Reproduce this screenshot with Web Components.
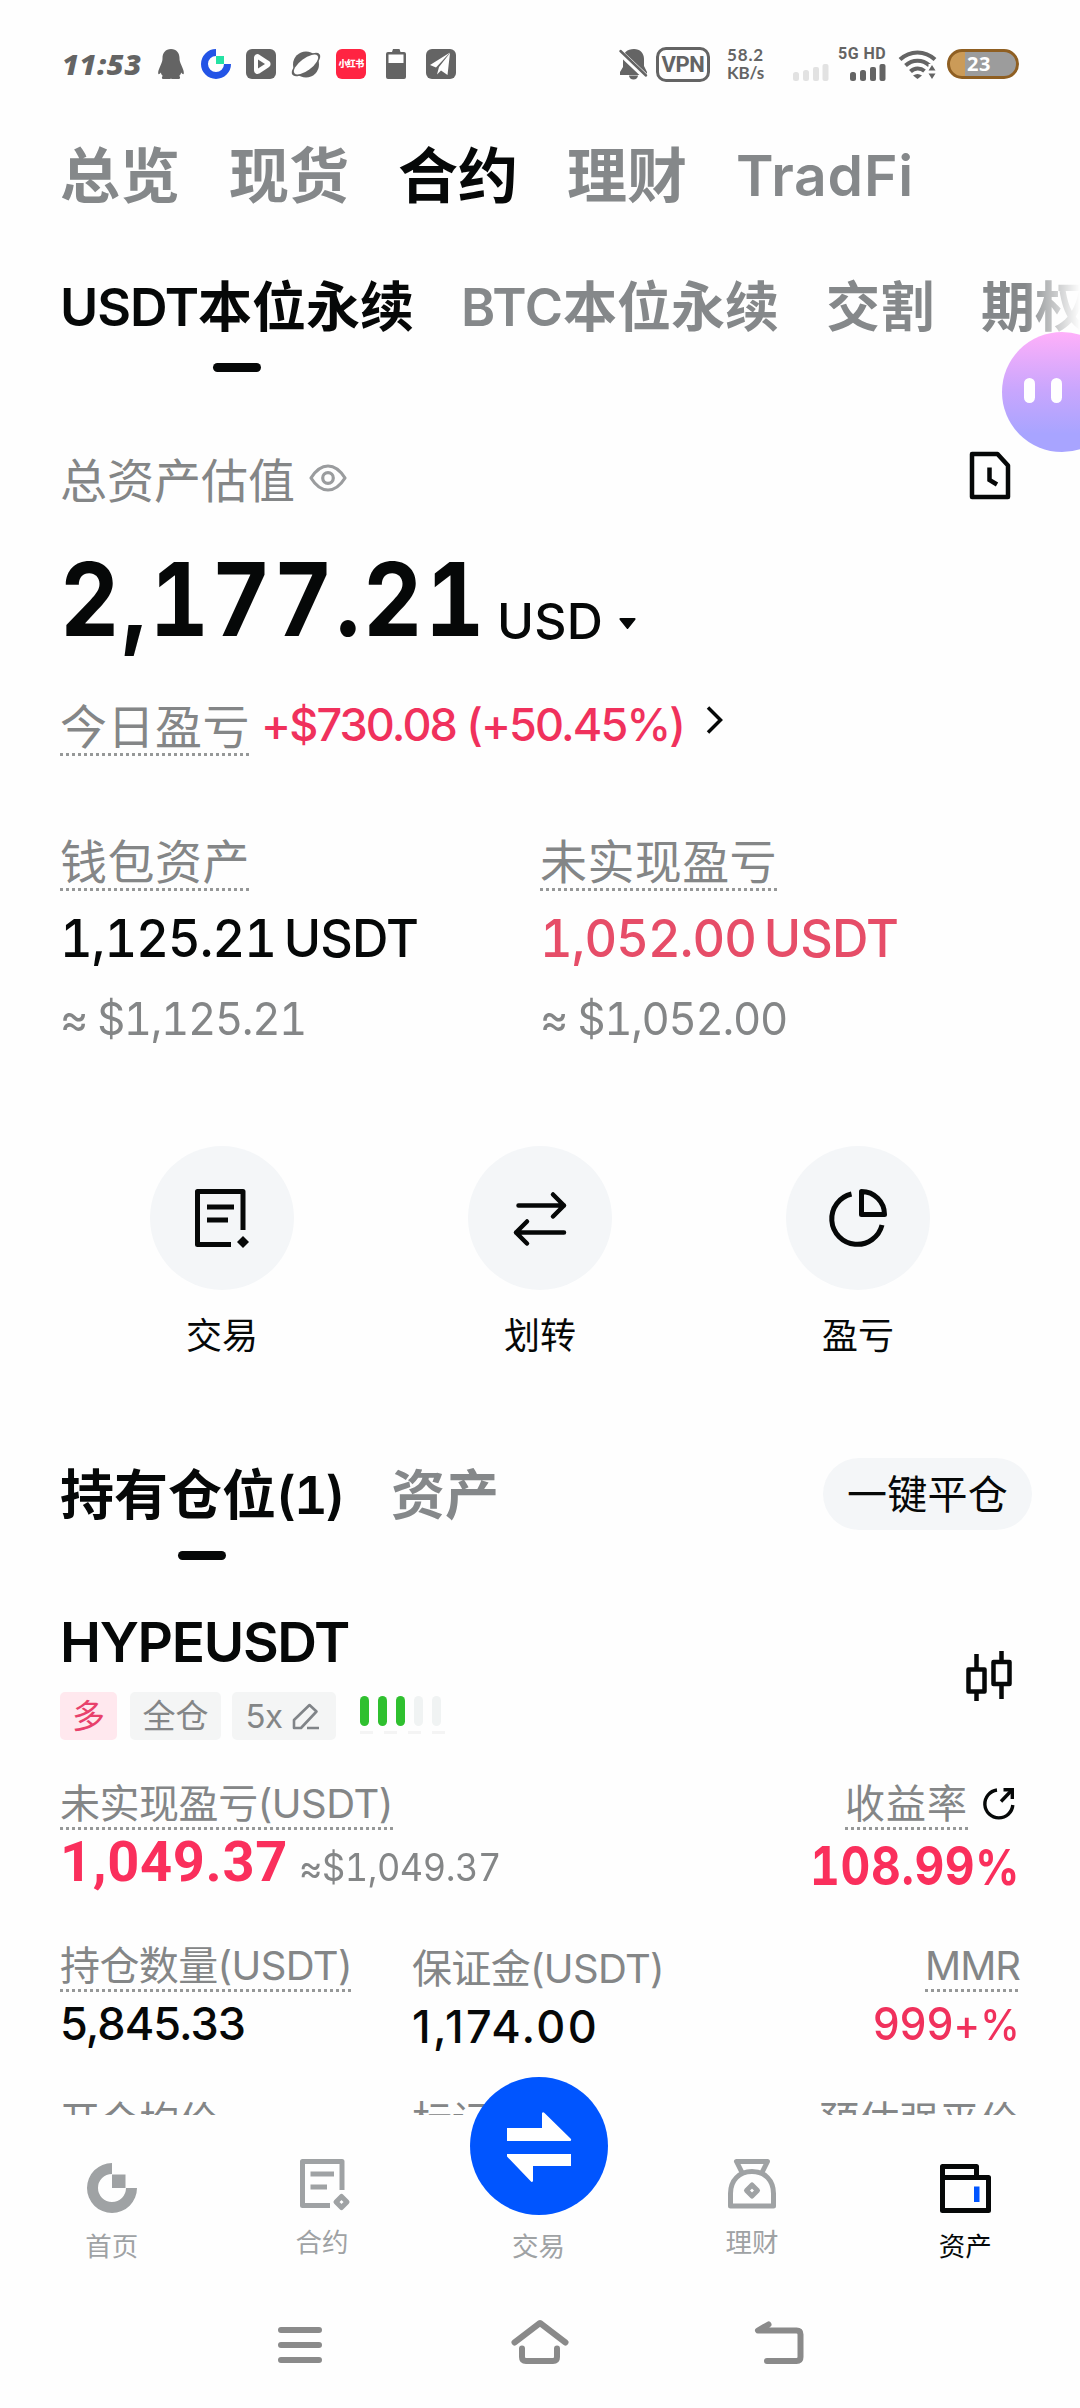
<!DOCTYPE html>
<html lang="zh-CN">
<head>
<meta charset="utf-8">
<title>合约资产</title>
<style>
  html, body { margin: 0; background: #fefefe; }
  body { width: 1080px; height: 2408px; overflow: hidden; color: #060808;
    font-family: Inter, "Noto Sans CJK SC", sans-serif; }
</style>
</head>
<body>
<asset-screen></asset-screen>
<script>
const ICONS = {
  qq: [26, 30, `<path fill="#646464" d="M13 0C18.500 0 21.500 4 21.500 9c0 3 .5 4 2 7.500 1.800 4 2.500 6 2.300 8-.2 1.200-1.500.6-2.600-1-.3 1.500-1 2.600-2 3.500 1.200.8 1.300 3-.7 3h-6.500c-.7 0-.7-.6-1-.6s-.4.600-1 .600H5.500c-2 0-1.900-2.200-.7-3-1-.9-1.700-2-2-3.500-1.100 1.600-2.400 2.200-2.600 1-.2-2 .5-4 2.300-8C4 13 4.500 12 4.500 9c0-5 3-9 8.500-9z"/>`],
  coin: [30, 30, `<path fill="#2354e6" d="M15 0A15 15 0 1 0 30 15H23A8 8 0 1 1 15 7z"/><path fill="#25e2a4" d="M15 7h8v8h-8z"/>`],
  play: [30, 30, `<rect width="30" height="30" rx="6" fill="#646464"/><path d="M10 8.500v13a1.500 1.500 0 0 0 2.200 1.300l9.500-6.200a1.700 1.700 0 0 0 0-3l-9.500-6.300A1.500 1.500 0 0 0 10 8.500z" fill="#fefefe" stroke="#fefefe" stroke-width="4" stroke-linejoin="round"/><path fill="#646464" d="M12 10.500v9l7-4.500z"/>`],
  planet: [30, 30, `<circle cx="15" cy="15.500" r="13" fill="#646464"/><ellipse cx="15" cy="15.500" rx="17" ry="7" transform="rotate(-37 15 15.500)" fill="#646464"/><ellipse cx="15" cy="15.500" rx="14.500" ry="6" transform="rotate(-37 15 15.500)" fill="#fefefe"/>`],
  battery: [20, 30, `<path fill="#646464" fill-rule="evenodd" d="M7 0h6.500l1 3H18a2 2 0 0 1 2 2v23a2 2 0 0 1-2 2H2a2 2 0 0 1-2-2V5a2 2 0 0 1 2-2h4zM2.500 5.500v8.500h15V5.500z"/>`],
  plane: [30, 30, `<rect width="30" height="30" rx="6" fill="#646464"/><path fill="#fefefe" d="M24 3.500 4 16l6 2.500zM24 4 13 18l-2 7.500 4-4 6.500 4.500z"/>`],
  bell: [27, 30, `<path fill="#646464" d="M14 0c6 0 10 4 10 10v7l3 6v3H3L0 26v-3l3-5v-8C3 4 7 0 14 0z"/><path fill="#646464" d="M9 26.500h9a4.500 4 0 0 1-9 0z"/><path d="M-1 2.500 27 29" stroke="#fefefe" stroke-width="6"/><path d="M.5 2 26 26.500" stroke="#646464" stroke-width="2.500" stroke-linecap="round"/>`],
  signal: [36, 17, `<g fill="currentColor"><rect y="8" width="6" height="9" rx="2.500"/><rect x="10" y="6" width="6" height="11" rx="2.500"/><rect x="20" y="3" width="6" height="14" rx="2"/><rect x="29.500" width="6" height="17" rx="2"/></g>`],
  wifi: [37, 29, `<g fill="none" stroke="#646464" stroke-width="4"><path d="M1 9.500C11 0 26 0 36 9.500"/><path d="M6.500 15.500c7-6.500 17-6.500 24 0"/><path d="M11.500 21.500c4-4 10-4 14-.5"/></g><path fill="#646464" d="M14 25.500q4.500-3 9 0L18.500 29z"/><path stroke="#fefefe" stroke-width="7" d="M33 14v15"/><path fill="#646464" d="m33 15 3.500 5.500h-7zM33 29l3.500-5.500h-7z"/>`],
  eye: [38, 28, `<g fill="none" stroke="#9a9c9e" stroke-width="3.200"><path stroke-linejoin="round" d="M2 14C7 6 12 2 19 2s12 4 17 12c-5 8-10 12-17 12S7 22 2 14z"/><circle cx="19" cy="14" r="5.300"/></g>`],
  history: [40, 47, `<g fill="none" stroke="#060808" stroke-width="4.500"><path stroke-linejoin="round" d="M2 2h25.500L38 13.500V45H2z"/><path d="M19.500 15.500V28l7.500 4.500"/></g>`],
  caret: [17, 11, `<path fill="#060808" d="M1.500 0h14a1 1 0 0 1 .8 1.700L9.300 10.500a1 1 0 0 1-1.600 0L.7 1.700A1 1 0 0 1 1.500 0z"/>`],
  chevron: [18, 28, `<path fill="none" stroke="#060808" stroke-width="3.500" d="M2 1.500 14.500 14 2 26.500"/>`],
  order: [54, 58, `<g fill="none" stroke="#060808" stroke-width="5"><path stroke-linejoin="round" d="M48 41V2.500H2.500v53H36"/><path d="M12 18h27M12 31h21"/></g><path fill="#060808" d="m48 47 6 6-6 6-6-6z"/>`],
  swap: [52, 53, `<g fill="none" stroke="#060808" stroke-width="4.500" stroke-linecap="round" stroke-linejoin="round"><path d="M4.500 13.500H50M39 2.500l11 11-11 11"/><path d="M50 40.500H2M13 29.500l-11 11 11 11"/></g>`],
  pie: [58, 58, `<g fill="none" stroke="#060808" stroke-width="5" stroke-linejoin="round"><path d="M22.500 5A25.500 25.500 0 1 0 53 36"/><path d="M32.500 2.500v23h23a23 23 0 0 0-23-23z"/></g>`],
  candles: [46, 50, `<g fill="none" stroke="#060808" stroke-width="4.500" stroke-linejoin="round"><path d="M2.500 18.500h16v22h-16zM10.500 3v15M10.500 41v9M27.500 11h16v22h-16zM35.500 0v11M35.500 33v15"/></g>`],
  pencil: [27, 27, `<path fill="none" stroke="#808488" stroke-width="2.600" stroke-linejoin="round" d="M2 25v-8L17.500 2l7 6.500L9 25zM15 25h12"/>`],
  share: [32, 33, `<g fill="none" stroke="#060808" stroke-width="3.400"><path d="M14 3A14 14 0 1 0 29.800 18M18 14.500 28 4"/><path d="M20.500 2.700h8.800V12"/></g>`],
  home: [50, 50, `<path fill="#9fa2a4" d="M25 0A25 25 0 1 0 50 25H39A14 14 0 1 1 25 11zM25 11.500h13.500V25H25z"/>`],
  contract: [50, 51, `<g fill="none" stroke="#9fa2a4" stroke-width="5"><path stroke-linejoin="round" d="M42 31V2.500H2.500v44H30"/><path d="M10.500 15H34M10.500 28H27"/><path stroke-linejoin="round" d="m41.500 37.500 5.500 5.500-5.500 5.500L36 43z"/></g>`],
  trade: [138, 138, `<circle cx="69" cy="69" r="69" fill="#0055ff"/><path fill="#fff" d="M37 51h35V36q1-1.500 2.500 0l26.500 26q.5 2-1 2H37zM101 77v12H63v15q-1 2-2.500 0L37 79.500V77z"/>`],
  bag: [48, 50, `<g fill="none" stroke="#9fa2a4" stroke-width="5" stroke-linejoin="round"><path d="M14 13.500 8.500 2.500h31L34 13.500"/><path d="M24 12.500c-13 0-21.500 9-21.500 22V47h43V34.500c0-13-8.500-22-21.500-22z"/><path d="m24 26 5.500 5.500L24 37l-5.500-5.500z"/></g>`],
  wallet: [51, 49, `<g fill="none" stroke="#060808" stroke-width="5" stroke-linejoin="round"><path d="M2.500 13.500h46v33h-46zM2.500 13.500v-11h34v11"/></g><path fill="#0055ff" d="M34 22.500h5.500V38H34z"/>`],
  menu: [46, 38, `<path stroke="#8a8a8a" stroke-width="6" stroke-linecap="round" d="M4 4h38M4 19h38M4 34h38"/>`],
  sysHome: [58, 44, `<g fill="none" stroke="#8a8a8a" stroke-width="6" stroke-linecap="round" stroke-linejoin="round"><path d="M3.500 22.500 29 3l25.500 19.500"/><path d="M11 28.500v8.500q0 4 4 4h27q4 0 4-4v-8.500"/></g>`],
  back: [49, 43, `<path fill="none" stroke="#8a8a8a" stroke-width="6" stroke-linecap="round" stroke-linejoin="round" d="M13.500 3.500 3 9.500h38.500q4 0 4 4V36q0 4-4 4H12"/>`],
};

/* Shared base: renders the static markup of a class into an open shadow root. */
class Base extends HTMLElement {
  connectedCallback() {
    if (this.shadowRoot) return;
    this.attachShadow({ mode: 'open' }).innerHTML = this.view();
  }
}

const ROW = `*{box-sizing:border-box} .row{display:flex;align-items:center} .grow{flex:1}`;

class UiIcon extends Base {
  view() {
    const [w, h, body] = ICONS[this.getAttribute('name')];
    return `<style>:host{display:block;flex:none;width:${w}px;height:${h}px}svg{display:block;overflow:visible}</style>
      <svg width="${w}" height="${h}" viewBox="0 0 ${w} ${h}">${body}</svg>`;
  }
}

/* A single line of text whose tracking is tuned so that it spans w pixels.
   squeeze condenses the glyphs horizontally by that factor first. */
class FitText extends Base {
  view() {
    const k = this.getAttribute('squeeze') || 1;
    return `<style>:host{display:block;flex:none;width:max-content;white-space:nowrap}
      span{display:inline-block;${k === 1 ? '' : `transform:scaleX(${k});transform-origin:0 50%`}}</style><span><slot></slot></span>`;
  }
  connectedCallback() {
    super.connectedCallback();
    const w = +this.getAttribute('w');
    if (!w) return;
    const k = +(this.getAttribute('squeeze') || 1);
    const natural = this.getBoundingClientRect().width;
    this.style.letterSpacing = (w / k - natural) / [...this.textContent].length + 'px';
    this.style.width = w + 'px';
  }
}

class HintLabel extends Base {
  view() {
    return `<style>:host{display:block;flex:none;width:max-content;white-space:nowrap;color:var(--muted);font-size:47px;line-height:52px}
      i{display:block;height:3px;background:repeating-linear-gradient(90deg,#969898 0 3px,transparent 3px 6px)}
      :host([plain]) i{visibility:hidden}</style><slot></slot><i></i>`;
  }
}

class StatusBar extends Base {
  view() {
    return `<style>${ROW}
      :host{display:flex;align-items:center;height:128px;padding:0 61px 0 62px;color:#646464}
      .time{font:italic 800 29px/40px "Open Sans",sans-serif;margin-right:16px}
      .red{width:30px;height:30px;border-radius:6px;background:#ff2442;color:#fff;font-size:9px;line-height:30px;font-weight:900;display:flex;justify-content:center}
      .vpn{width:54px;height:35px;border:3px solid #646464;border-radius:10px;font:700 22px/29px Roboto,sans-serif;display:flex;justify-content:center;margin:0 17px 0 9px}
      .rate{font:700 17px/18px Lato,sans-serif;margin-right:29px}
      .five{height:34px;font:700 16px/14px Roboto,sans-serif;display:flex;flex-direction:column;align-items:flex-end;justify-content:space-between;margin:0 13px 0 9px}
      .bat{width:72px;height:30px;border:3px solid #8f5f22;border-radius:15px;background:linear-gradient(90deg,#cb9b58 0 15px,#9c9c9c 15px);color:#fff;font:700 20px/24px "Open Sans",sans-serif;display:flex;padding-left:17px;margin-left:11px}
      </style>
      <fit-text class="time" w="80">11:53</fit-text>
      <ui-icon name="qq"></ui-icon>
      <ui-icon name="coin" style="margin-left:17px"></ui-icon>
      <ui-icon name="play" style="margin-left:15px"></ui-icon>
      <ui-icon name="planet" style="margin-left:15px"></ui-icon>
      <div class="red" style="margin-left:15px"><fit-text w="25">小红书</fit-text></div>
      <ui-icon name="battery" style="margin-left:20px"></ui-icon>
      <ui-icon name="plane" style="margin-left:20px"></ui-icon>
      <span class="grow"></span>
      <ui-icon name="bell"></ui-icon>
      <div class="vpn"><fit-text w="43">VPN</fit-text></div>
      <div class="rate"><fit-text w="37">58.2</fit-text><fit-text w="37">KB/s</fit-text></div>
      <ui-icon name="signal" style="color:#e2e2e2;margin-top:17px"></ui-icon>
      <div class="five"><fit-text w="48">5G HD</fit-text><ui-icon name="signal"></ui-icon></div>
      <ui-icon name="wifi"></ui-icon>
      <div class="bat"><fit-text w="24">23</fit-text></div>`;
  }
}

class TabItem extends Base {
  view() {
    return `<style>:host{display:flex;flex:none;flex-direction:column;align-items:center;color:#85888a;white-space:nowrap;font-weight:700}
      :host([active]){color:#060808}
      .t{display:flex}
      i{display:none;width:48px;height:9px;border-radius:5px;background:#060808;margin-top:var(--bar-gap,25px)}
      :host([active][bar]) i{display:block}</style><div class="t"><slot></slot></div><i></i>`;
  }
}

class HelperBubble extends Base {
  view() {
    return `<style>:host{position:absolute;left:1002px;top:332px;width:120px;height:120px;border-radius:60px;background:linear-gradient(180deg,#ffb0fa,#c9a6fd 48%,#a8a4ff 85%);display:flex;gap:16px;padding:46px 0 0 22px;box-sizing:border-box}
      i{width:11px;height:25px;border-radius:6px;background:#fff}</style><i></i><i></i>`;
  }
}

class QuickAction extends Base {
  view() {
    return `<style>:host{display:flex;flex-direction:column;align-items:center;width:144px;font-size:36px;line-height:40px}
      .c{width:144px;height:144px;border-radius:50%;background:#f4f6f8;display:flex;align-items:center;justify-content:center;margin-bottom:26px}</style>
      <div class="c"><ui-icon name="${this.getAttribute('icon')}"></ui-icon></div><slot></slot>`;
  }
}

class AssetSummary extends Base {
  view() {
    return `<style>${ROW}
      :host{display:block;padding:57px 60px 0}
      .est{height:60px;font-size:47px;line-height:56px;color:var(--muted);gap:16px}
      .total{margin-top:30px;height:120px;display:flex;align-items:flex-start}
      .big{font-weight:700;font-size:102px;line-height:120px;font-feature-settings:var(--slab)}
      .usd{font-size:50px;line-height:60px;font-weight:500;margin:52px 0 0 10px}
      .pnl{margin-top:42px;align-items:flex-start}
      .red{color:#f0315c;font-size:45px;line-height:48px;font-weight:500;margin-left:11px}
      .stats{display:grid;grid-template-columns:480px 1fr;margin-top:80px}
      .val{font-size:52px;line-height:60px;font-weight:500;margin-top:18px;word-spacing:-5px;font-feature-settings:var(--slab)}
      .loss{color:#e64d68}
      .eq{font-size:45px;line-height:50px;color:var(--muted);margin-top:25px;font-feature-settings:var(--slab)}
      .acts{display:flex;justify-content:space-between;padding:0 90px;margin-top:102px}
      </style>
      <div class="row est"><fit-text w="235" style="margin-top:3px">总资产估值</fit-text><ui-icon name="eye" style="margin:-2px 0 0 -2px"></ui-icon><span class="grow"></span><ui-icon name="history" style="margin:-7px 10px 0 0"></ui-icon></div>
      <div class="total"><fit-text class="big" w="427" squeeze=".9">2,177.21</fit-text><fit-text class="usd" w="106">USD</fit-text><ui-icon name="caret" style="margin:79px 0 0 16px"></ui-icon></div>
      <div class="row pnl"><hint-label><fit-text w="190">今日盈亏</fit-text></hint-label><fit-text class="red" w="423">+$730.08 (+50.45%)</fit-text><ui-icon name="chevron" style="margin:5px 0 0 22px"></ui-icon></div>
      <div class="stats">
        <div><hint-label><fit-text w="190">钱包资产</fit-text></hint-label><fit-text class="val" w="358" squeeze=".97">1,125.21 USDT</fit-text><fit-text class="eq" w="246" squeeze=".97">≈ $1,125.21</fit-text></div>
        <div><hint-label><fit-text w="237">未实现盈亏</fit-text></hint-label><fit-text class="val loss" w="358" squeeze=".97">1,052.00 USDT</fit-text><fit-text class="eq" w="247" squeeze=".97">≈ $1,052.00</fit-text></div>
      </div>
      <div class="acts"><quick-action icon="order">交易</quick-action><quick-action icon="swap">划转</quick-action><quick-action icon="pie">盈亏</quick-action></div>`;
  }
}

class PositionTag extends Base {
  view() {
    return `<style>:host{display:flex;align-items:center;justify-content:center;height:48px;border-radius:5px;background:#f4f5f5;color:var(--muted);font-size:33px;line-height:48px;gap:9px;box-sizing:border-box}
      :host([tone=long]){background:#ffe8ee;color:#e8416b}</style><slot></slot>`;
  }
}

class StrengthMeter extends Base {
  view() {
    return `<style>:host{display:flex;flex-direction:column;gap:5px;align-self:flex-start;margin-top:4px}
      div{display:flex;gap:9px} i{width:9px;height:30px;border-radius:5px;background:#f0f3f3} .on{background:#2fc02f}
      .u{gap:11px} .u i{width:13px;height:3px;border-radius:0;background:#f4f4f4}</style>
      <div><i class="on"></i><i class="on"></i><i class="on"></i><i></i><i></i></div><div class="u"><i></i><i></i><i></i><i></i></div>`;
  }
}

class PositionCard extends Base {
  view() {
    return `<style>${ROW}
      :host{display:block;padding:52px 60px 0}
      .name{font-size:55px;line-height:60px;font-weight:600}
      .tags{display:flex;margin-top:20px}
      hint-label{font-size:40px;line-height:46px}
      .a{display:flex;justify-content:space-between;margin-top:41px;height:162px}
      .r{display:flex;flex-direction:column;align-items:flex-end}
      .big{display:flex;align-items:baseline;line-height:60px;margin-top:2px}
      .pnl{font:700 56px/60px Roboto,sans-serif;color:#fa2f5c}
      .eq{font-size:38px;color:var(--muted);margin-left:11px;font-feature-settings:var(--slab)}
      .roi{font-weight:700;font-size:53px;line-height:60px;color:#fa2f5c;margin-top:6px;font-feature-settings:var(--slab)}
      .b{display:grid;grid-template-columns:352px 1fr auto;height:155px}
      .v{font-size:45px;line-height:50px;font-weight:500;margin-top:7px}
      .m{padding-top:3px}
      small{font-size:.94em}
      </style>
      <div class="row"><div class="grow"><fit-text class="name" w="289">HYPEUSDT</fit-text>
        <div class="tags">
          <position-tag tone="long" style="width:57px">多</position-tag>
          <position-tag style="width:91px;margin-left:13px">全仓</position-tag>
          <position-tag style="width:104px;margin-left:11px"><fit-text w="37">5x</fit-text><ui-icon name="pencil" style="margin-right:4px"></ui-icon></position-tag>
          <strength-meter style="margin-left:24px"></strength-meter>
        </div></div><ui-icon name="candles" style="margin-right:8px"></ui-icon></div>
      <div class="a">
        <div><hint-label><fit-text w="333">未实现盈亏(USDT)</fit-text></hint-label><div class="big"><fit-text class="pnl" w="228">1,049.37</fit-text><fit-text class="eq" w="202" squeeze=".95">≈$1,049.37</fit-text></div></div>
        <div class="r"><div class="row" style="align-items:flex-start"><hint-label><fit-text w="123">收益率</fit-text></hint-label><ui-icon name="share" style="margin:6px 5px 0 15px"></ui-icon></div><fit-text class="roi" w="210" squeeze=".87">108.99<small>%</small></fit-text></div>
      </div>
      <div class="b">
        <div><hint-label><fit-text w="292">持仓数量(USDT)</fit-text></hint-label><fit-text class="v" w="185">5,845.33</fit-text></div>
        <div class="m"><hint-label plain><fit-text w="252">保证金(USDT)</fit-text></hint-label><fit-text class="v" w="187">1,174.00</fit-text></div>
        <div class="r"><hint-label><fit-text w="95">MMR</fit-text></hint-label><fit-text class="v" w="147" squeeze=".94" style="color:#f0315c">999<small>+%</small></fit-text></div>
      </div>
      <div class="b"><hint-label><fit-text w="159">开仓均价</fit-text></hint-label><hint-label><fit-text w="159">标记价格</fit-text></hint-label><hint-label><fit-text w="201">预估强平价</fit-text></hint-label></div>`;
  }
}

class NavItem extends Base {
  view() {
    return `<style>:host{display:flex;flex:1;flex-direction:column;align-items:center;color:#9fa2a4;font-size:26.500px;line-height:30px}
      :host([active]){color:#060808}
      .gap{flex:1}</style>
      <ui-icon name="${this.getAttribute('icon')}"></ui-icon><span class="gap"></span><slot></slot>`;
  }
}

class BottomNav extends Base {
  view() {
    return `<style>:host{display:flex;height:175px;padding:0 8px 0 5px;box-sizing:border-box;background:#fefefe;position:relative}
      nav-item{box-sizing:border-box}</style>
      <nav-item icon="home" style="padding:48px 0 29px">首页</nav-item>
      <nav-item icon="contract" style="padding:44px 0 33px"><span style="padding-right:6px">合约</span></nav-item>
      <nav-item icon="trade" style="margin-top:-38px;padding:0 0 29px">交易</nav-item>
      <nav-item icon="bag" style="padding:44px 0 33px">理财</nav-item>
      <nav-item icon="wallet" style="padding:49px 0 29px" active>资产</nav-item>`;
  }
}

class SystemNav extends Base {
  view() {
    return `<style>:host{display:flex;align-items:flex-end;justify-content:space-between;height:118px;padding:0 276px 44px 277px;box-sizing:border-box}</style>
      <ui-icon name="menu"></ui-icon><ui-icon name="sysHome" style="margin-left:1px"></ui-icon><ui-icon name="back"></ui-icon>`;
  }
}

class AssetScreen extends Base {
  view() {
    return `<style>${ROW}
      :host{display:flex;flex-direction:column;width:1080px;height:2408px;position:relative;overflow:hidden;background:#fefefe;--slab:"tnum";--muted:#848687}
      main{height:2115px;flex:none;overflow:hidden}
      .top{display:flex;gap:49px;height:92px;padding:2px 0 0 60px;font-size:60px;line-height:92px}
      .top .l{font-size:57px;font-weight:600}
      .sub{display:flex;gap:47px;height:172px;padding:58px 0 0 60px;font-size:54px;line-height:60px;overflow:hidden;
        -webkit-mask:linear-gradient(90deg,#000 1025px,transparent 1080px)}
      .l{font-size:52px;font-weight:600}
      .pos{display:flex;padding:0 48px 0 60px;margin-top:102px;height:102px;font-size:54px;line-height:75px;--bar-gap:18px;gap:48px}
      .pill{margin-left:auto;width:209px;height:72px;border-radius:36px;background:#f4f6f8;font-size:40px;line-height:73px;display:flex;justify-content:center}
      </style>
      <main>
        <status-bar></status-bar>
        <div class="top"><tab-item>总览</tab-item><tab-item>现货</tab-item><tab-item active>合约</tab-item><tab-item>理财</tab-item><tab-item><fit-text class="l" w="178">TradFi</fit-text></tab-item></div>
        <div class="sub"><tab-item active bar><fit-text class="l" w="138">USDT</fit-text><span>本位永续</span></tab-item><tab-item><fit-text class="l" w="102">BTC</fit-text><span>本位永续</span></tab-item><tab-item>交割</tab-item><tab-item>期权</tab-item></div>
        <asset-summary></asset-summary>
        <div class="pos"><tab-item active bar><span>持有仓位</span><fit-text class="l" w="67" style="font-feature-settings:var(--slab)">(1)</fit-text></tab-item><tab-item>资产</tab-item><div class="pill"><fit-text w="161">一键平仓</fit-text></div></div>
        <position-card></position-card>
      </main>
      <bottom-nav></bottom-nav>
      <system-nav></system-nav>
      <helper-bubble></helper-bubble>`;
  }
}

customElements.define('asset-screen', AssetScreen);
customElements.define('status-bar', StatusBar);
customElements.define('asset-summary', AssetSummary);
customElements.define('position-card', PositionCard);
customElements.define('bottom-nav', BottomNav);
customElements.define('system-nav', SystemNav);
customElements.define('helper-bubble', HelperBubble);
customElements.define('tab-item', TabItem);
customElements.define('quick-action', QuickAction);
customElements.define('position-tag', PositionTag);
customElements.define('strength-meter', StrengthMeter);
customElements.define('nav-item', NavItem);
customElements.define('hint-label', HintLabel);
customElements.define('ui-icon', UiIcon);
customElements.define('fit-text', FitText);
</script>
</body>
</html>
